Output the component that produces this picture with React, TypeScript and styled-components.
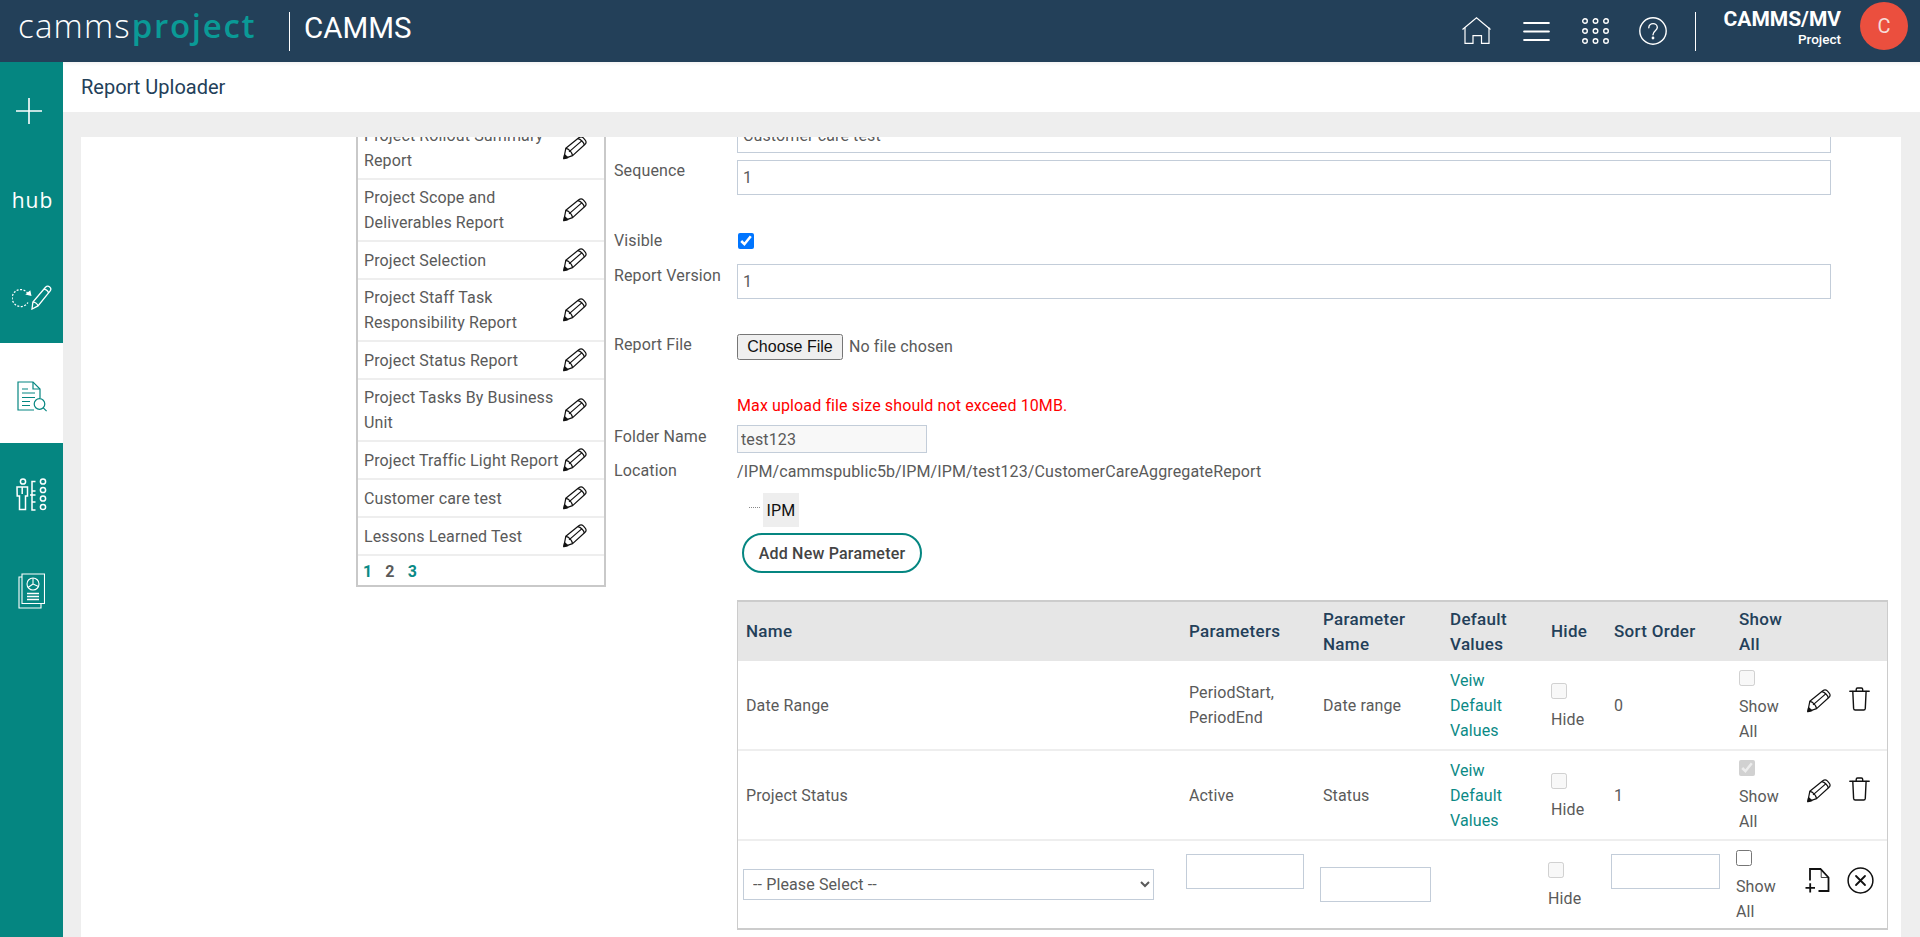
import React from "react";
import styled, { createGlobalStyle } from "styled-components";

const Global = createGlobalStyle`
  html, body { margin: 0; padding: 0; height: 100%; overflow: hidden; }
  body { font-family: Roboto, "Liberation Sans", sans-serif; font-size: 16px; letter-spacing: .12px; color: #5a5a5a; background: #eee; }
  * { box-sizing: border-box; }
`;

const Shell = styled.div`
  width: 1920px; height: 937px; display: flex; flex-direction: column; overflow: hidden;
`;
const Header = styled.header`
  height: 62px; flex: none; background: #234059; display: flex; align-items: center; color: #fff; padding-right: 12px;
`;
const Logo = styled.div`
  margin-left: 18px; width: 271px; font-family: "Open Sans", sans-serif; font-size: 33px; line-height: 52px;
  padding-bottom: 10px; font-weight: 300; letter-spacing: 1.2px; color: #fff; white-space: nowrap;
`;
const LogoAccent = styled.span`
  color: #0a9a96; font-weight: 600; letter-spacing: 1.7px; margin-left: 1px;
`;
const VRule = styled.div`
  width: 1px; height: 39px; background: #fff;
`;
const Tenant = styled.div`
  margin-left: 14px; font-size: 29.5px; font-weight: 400; line-height: 56px; padding-bottom: 6px; flex: 1; letter-spacing: 0;
`;
const HeadIcons = styled.div`
  display: flex; align-items: center;
`;
const HeadIcon = styled.div<{ $w: number }>`
  width: ${(p) => p.$w}px; display: flex;
`;
const UserBox = styled.div`
  margin-left: 26px; width: 119px; text-align: right; display: flex; flex-direction: column; align-items: flex-end;
`;
const UserName = styled.div`
  font-size: 21px; font-weight: 700; line-height: 22px; margin-top: -6px; white-space: nowrap; letter-spacing: 0;
`;
const UserRole = styled.div`
  font-size: 13.5px; font-weight: 500; line-height: 18px; margin-top: 0; letter-spacing: 0;
`;
const Avatar = styled.div`
  margin-left: 19px; width: 48px; height: 48px; border-radius: 50%; background: #eb4f3e; color: #f7dcd8;
  display: flex; align-items: center; justify-content: center; font-size: 20px; margin-top: -10px;
`;
const Body = styled.div`
  flex: 1; display: flex; min-height: 0;
`;
const Sidebar = styled.nav`
  width: 63px; flex: none; background: #058681; display: flex; flex-direction: column;
`;
const SideItem = styled.div<{ $h?: number; $active?: boolean; $nudge?: number; $ox?: number }>`
  height: ${(p) => p.$h ?? 100}px; flex: none; display: flex; align-items: center; justify-content: center;
  background: ${(p) => (p.$active ? "#fff" : "transparent")};
  padding-top: ${(p) => Math.max(p.$nudge ?? 0, 0)}px;
  padding-bottom: ${(p) => Math.max(-(p.$nudge ?? 0), 0)}px;
  padding-right: ${(p) => p.$ox ?? 0}px;
`;
const HubMark = styled.span`
  font-family: "Open Sans", sans-serif; font-size: 21px; font-weight: 400; letter-spacing: 1px; color: #fff;
  line-height: 30px; margin-left: 2px;
`;
const Main = styled.main`
  flex: 1; display: flex; flex-direction: column; min-width: 0;
`;
const SubHeader = styled.div`
  height: 50px; flex: none; background: #fff; padding-left: 18px; display: flex; align-items: center;
  font-size: 20px; letter-spacing: 0; color: #234059; box-shadow: inset 0 5px 4px -4px rgba(0,0,0,.07);
`;
const Panel = styled.div`
  flex: 1; margin: 25px 19px 0 18px; background: #fff; overflow: hidden; min-height: 0;
`;
const Scrolled = styled.div`
  margin-top: -19px; padding-left: 275px; display: flex; align-items: flex-start;
`;
const ReportList = styled.div`
  width: 250px; flex: none; display: flex; flex-direction: column; gap: 2px; background: #eee;
  border-left: 2px solid #c9c9c9; border-right: 2px solid #c9c9c9; border-bottom: 2px solid #c9c9c9;
`;
const ReportRow = styled.div`
  background: #fff; min-height: 36px; padding: 5px 17px 5px 6px; display: flex; align-items: center;
  justify-content: space-between; line-height: 25px;
`;
const ReportName = styled.span`
  max-width: 198px;
`;
const Pager = styled.div`
  background: #fff; height: 29px; display: flex; align-items: center; padding: 2px 0 0 5px; gap: 13px;
  font-weight: 700;
`;
const PageNum = styled.span<{ $link?: boolean }>`
  color: ${(p) => (p.$link ? "#0b8a86" : "#5a5a5a")};
`;
const Form = styled.div`
  flex: 1; padding-left: 8px; display: flex; flex-direction: column; min-width: 0;
`;
const FormRow = styled.div<{ $mt?: number; $h?: number }>`
  display: flex; align-items: center; margin-top: ${(p) => p.$mt ?? 0}px;
  min-height: ${(p) => p.$h ?? 0}px;
`;
const Label = styled.label<{ $up?: number }>`
  width: 123px; flex: none; line-height: 25px; margin-top: -${(p) => p.$up ?? 0}px;
`;
const TextInput = styled.input<{ $w?: number; $h?: number; $mb?: number; $readonly?: boolean }>`
  width: ${(p) => (p.$w ? `${p.$w}px` : "1094px")}; height: ${(p) => p.$h ?? 35}px; flex: none;
  margin-bottom: ${(p) => p.$mb ?? 0}px;
  border: 1px solid #c3cdd9; padding: 0 3px 0 ${(p) => (p.$readonly ? 3 : 5)}px; font: 16px Roboto, sans-serif; letter-spacing: .12px;
  color: #5a5a5a; outline: none;
  background: ${(p) => (p.$readonly ? "#f8f8f8" : "#fff")}; border-radius: 0; display: block;
`;
const Check = styled.input`
  width: 16px; height: 16px; margin: 4px 0 8px; display: block; flex: none;
`;
const VisibleCheck = styled(Check)`
  margin: 0 0 0 1px;
`;
const FileInput = styled.input`
  font: 16px Roboto, sans-serif; letter-spacing: .12px; color: #5a5a5a; height: 26px; width: 300px;
  &::file-selector-button {
    font: 16px "Liberation Sans", sans-serif; width: 106px; height: 26px; margin-right: 6px; color: #111;
  }
`;
const Warning = styled.div`
  color: #f00; line-height: 25px; margin-left: 123px; margin-top: 33px;
`;
const PathText = styled.span`
  line-height: 25px; margin-top: 2px;
`;
const Tree = styled.div`
  margin-left: 135px; margin-top: 9px; display: flex; align-items: center; height: 34px;
`;
const TreeDots = styled.div`
  width: 11px; border-top: 1px dotted #888; margin-right: 3px; margin-top: -5px;
`;
const TreeNode = styled.div`
  width: 36px; height: 34px; background: #eee; color: #111; display: flex; align-items: center; justify-content: center;
`;
const AddButton = styled.button`
  margin-left: 128px; margin-top: 6px; width: 180px; height: 40px; border: 2px solid #058681; border-radius: 20px;
  background: #fff; color: #444; font: 500 16px Roboto, sans-serif; letter-spacing: .2px; align-self: flex-start; padding: 0;
`;
const Table = styled.div`
  margin: 27px 0 0 123px; width: 1151px; border: 1px solid #ccc; border-bottom: 2px solid #ccc; border-top: 2px solid #ccc;
  display: flex; flex-direction: column; gap: 2px; background: #eee;
`;
const TRow = styled.div<{ $h: number; $head?: boolean }>`
  display: grid; grid-template-columns: 443px 134px 127px 101px 63px 125px 66px 1fr;
  height: ${(p) => p.$h}px; align-items: center;
  background: ${(p) => (p.$head ? "#e6e6e6" : "#fff")};
  margin-bottom: ${(p) => (p.$head ? -2 : 0)}px;
`;
const HCell = styled.div`
  padding: 0 8px; font-size: 17px; letter-spacing: .3px; font-weight: 500; color: #234059; line-height: 25px;
`;
const HCellNarrow = styled(HCell)`
  width: min-content;
`;
const Cell = styled.div<{ $pad?: number }>`
  padding: 0 ${(p) => p.$pad ?? 8}px; line-height: 25px;
`;
const Words = styled.div`
  width: min-content;
`;
const LinkWords = styled.a`
  display: block; width: min-content; color: #0b8a86;
`;
const Actions = styled.div<{ $gap?: number; $pl?: number }>`
  display: flex; align-items: center; padding: 0 0 8px ${(p) => p.$pl ?? 10}px; gap: ${(p) => p.$gap ?? 18}px;
`;
const SelectBox = styled.select`
  width: 411px; height: 31px; border: 1px solid #c3cdd9; background: #fff; color: #5a5a5a; padding-left: 5px;
  font: 16px Roboto, sans-serif; letter-spacing: .12px; border-radius: 0; outline: none; display: block;
`;
const TrashSvg = styled.svg`
  margin-bottom: 5px;
`;

const pencilBody = "M.8 22.600L2.800 12.300 15.800 1.700c1.600-1.200 3.300-1 4.500.2l1.900 2.200c1.200 1.500 1 3.200-.4 4.400L9.600 19.600z";
const pencilLines = "M2.800 12.300c3 .4 6.300 3.900 6.800 7.300M6 15.900L19 4.600M14.800 2.600c3 .5 6 3.700 6.500 6.400";

const Pencil = () => (
  <svg width="24" height="24" viewBox="0 0 24 24" fill="none" stroke="#111" strokeWidth="1.200" strokeLinejoin="round">
    <path d={pencilBody} />
    <path d={pencilLines} />
    <path d="M.8 22.600l.8-4 3.300 3z" fill="#111" />
  </svg>
);
const Trash = () => (
  <TrashSvg width="21" height="24" viewBox="0 0 21 24" fill="none" stroke="#111" strokeWidth="1.400" strokeLinecap="round">
    <path d="M.8 4.200h19.400M7.200 4V2.400c0-.8.5-1.400 1.300-1.400h3.900c.8 0 1.300.6 1.300 1.400V4" />
    <path d="M3.800 4.400l.8 17c.1.9.7 1.600 1.600 1.600h8.500c.9 0 1.500-.7 1.600-1.600l.8-17" />
  </TrashSvg>
);
const FileAdd = () => (
  <svg width="25" height="25" viewBox="0 0 25 25" fill="none" stroke="#111" strokeWidth="1.800">
    <path d="M5 12.500V1h10.500L23.500 9.500v13.500H13.500" />
    <path d="M16.200 1.500v8h7" strokeWidth=".8" />
    <path d="M.5 19.800h9.500M5.200 15.200v9.300" />
  </svg>
);
const CircleX = () => (
  <svg width="27" height="27" viewBox="0 0 27 27" fill="none" stroke="#111" strokeWidth="1.500" strokeLinecap="round">
    <circle cx="13.500" cy="13.500" r="12.400" />
    <path d="M9 9l9 9M18 9l-9 9" strokeWidth="1.800" />
  </svg>
);
const HomeIcon = () => (
  <svg width="30" height="28" viewBox="0 0 30 28" fill="none" stroke="#fff" strokeWidth="1.200">
    <path d="M.5 12.500L14.500.8l14 11.700" />
    <path d="M3 10.500v15.800h8v-7.600h8.500v7.600H27V10.500" />
  </svg>
);
const MenuIcon = () => (
  <svg width="27" height="21" viewBox="0 0 27 21" fill="none" stroke="#fff" strokeWidth="2.200" strokeLinecap="round">
    <path d="M1.200 2h24.600M1.200 10.500h24.600M1.200 19h24.600" />
  </svg>
);
const GridIcon = () => (
  <svg width="27" height="26" viewBox="0 0 27 26" fill="none" stroke="#fff" strokeWidth="1.400">
    {[3, 13, 23].flatMap((y) =>
      [3, 13.5, 24].map((x) => <circle key={`${x}-${y}`} cx={x} cy={y} r="2.300" />)
    )}
  </svg>
);
const HelpIcon = () => (
  <svg width="28" height="28" viewBox="0 0 28 28" fill="none" stroke="#fff" strokeWidth="1.400" strokeLinecap="round">
    <circle cx="14" cy="14" r="13.200" />
    <path d="M9.800 10.800c0-2.600 2-4.200 4.300-4.200s4.200 1.600 4.200 3.900c0 3.200-4.300 3.400-4.300 7.200" />
    <circle cx="14" cy="21" r=".7" fill="#fff" />
  </svg>
);
const PlusIcon = () => (
  <svg width="26" height="26" viewBox="0 0 26 26" stroke="#fff" strokeWidth="1.600">
    <path d="M0 13h26M13 0v26" />
  </svg>
);
const EditLoopIcon = () => (
  <svg width="40" height="25" viewBox="0 0 40 25" fill="none" stroke="#fff" strokeWidth="1.300">
    <path d="M15.800 8.400A8.500 8.500 0 1 0 15.900 17.500" strokeDasharray="2 1.500" />
    <path d="M19.500 11l-6.200-1.400 5-4.300z" fill="#fff" stroke="none" />
    <path d="M20 24l.9-7L33.500 2.300c1.200-1.300 2.900-1.400 4.200-.3 1.300 1.100 1.400 2.800.3 4.200L26 20.900z" />
    <path d="M20.900 17c2.100.2 4.700 1.900 5.100 3.900M31.900 4.100c2 .3 4.300 2.100 4.700 4" />
  </svg>
);
const ReportIcon = () => (
  <svg width="30" height="31" viewBox="0 0 30 31" fill="none" stroke="#058681" strokeWidth="1.200">
    <path d="M17 29H1V1h15l7 7v9" />
    <path d="M16 1v7h7" />
    <path d="M5 8h6M5 12h13M5 16.500h13M5 20.500h8M5 24.500h8" />
    <circle cx="22.500" cy="23" r="5.300" />
    <path d="M26.300 26.800l3.300 3.300" />
  </svg>
);
const TeamIcon = () => (
  <svg width="31" height="33" viewBox="0 0 31 33" fill="none" stroke="#fff" strokeWidth="1.500">
    <circle cx="7" cy="3.500" r="2.600" />
    <path d="M1 9h10.500v9h-2v13.500H3.500V18H1.200zM6.200 9v7" />
    <path d="M19.500 3.500h-3.500v28.500h3.500M14 17h5.500M16 13h3.500M16 24h3.500" />
    {[3.5, 12, 20.5, 29].map((y) => <circle key={y} cx="27" cy={y} r="2.600" />)}
  </svg>
);
const ChartDocIcon = () => (
  <svg width="27" height="36" viewBox="0 0 27 36" fill="none" stroke="#fff" strokeWidth="1.100">
    <path d="M4 1h22.500v29.500H4z" />
    <path d="M4 4H1v31h22v-4.500" />
    <circle cx="15" cy="11" r="6" />
    <path d="M15 11V5M15 11l-5 3.500M15 11l5.500 2.500" />
    <path d="M9 20.500h12M9 23.500h12M9 26.500h12" strokeWidth="1.300" />
  </svg>
);

const reports: string[] = [
  "Project Rollout Summary Report",
  "Project Scope and Deliverables Report",
  "Project Selection",
  "Project Staff Task Responsibility Report",
  "Project Status Report",
  "Project Tasks By Business Unit",
  "Project Traffic Light Report",
  "Customer care test",
  "Lessons Learned Test",
];

const params = [
  { name: "Date Range", values: "PeriodStart, PeriodEnd", label: "Date range", sort: "0", all: false },
  { name: "Project Status", values: "Active", label: "Status", sort: "1", all: true },
];

export default function App() {
  return (
    <Shell>
      <Global />
      <Header>
        <Logo>camms<LogoAccent>project</LogoAccent></Logo>
        <VRule />
        <Tenant>CAMMS</Tenant>
        <HeadIcons>
          <HeadIcon $w={61}><HomeIcon /></HeadIcon>
          <HeadIcon $w={59}><MenuIcon /></HeadIcon>
          <HeadIcon $w={57}><GridIcon /></HeadIcon>
          <HeadIcon $w={56}><HelpIcon /></HeadIcon>
        </HeadIcons>
        <VRule />
        <UserBox>
          <UserName>CAMMS/MV</UserName>
          <UserRole>Project</UserRole>
        </UserBox>
        <Avatar>C</Avatar>
      </Header>
      <Body>
        <Sidebar>
          <SideItem $h={81} $nudge={16} $ox={5}><PlusIcon /></SideItem>
          <SideItem $nudge={14}><HubMark>hub</HubMark></SideItem>
          <SideItem $nudge={8}><EditLoopIcon /></SideItem>
          <SideItem $active $nudge={6}><ReportIcon /></SideItem>
          <SideItem $nudge={2}><TeamIcon /></SideItem>
          <SideItem $nudge={-5}><ChartDocIcon /></SideItem>
        </Sidebar>
        <Main>
          <SubHeader>Report Uploader</SubHeader>
          <Panel>
            <Scrolled>
              <ReportList>
                {reports.map((r) => (
                  <ReportRow key={r}>
                    <ReportName>{r}</ReportName>
                    <Pencil />
                  </ReportRow>
                ))}
                <Pager>
                  <PageNum $link>1</PageNum>
                  <PageNum>2</PageNum>
                  <PageNum $link>3</PageNum>
                </Pager>
              </ReportList>
              <Form>
                <FormRow>
                  <Label />
                  <TextInput defaultValue="Customer care test" />
                </FormRow>
                <FormRow $mt={7}>
                  <Label $up={14}>Sequence</Label>
                  <TextInput defaultValue="1" />
                </FormRow>
                <FormRow $mt={33} $h={25}>
                  <Label>Visible</Label>
                  <VisibleCheck type="checkbox" defaultChecked />
                </FormRow>
                <FormRow $mt={11}>
                  <Label $up={12}>Report Version</Label>
                  <TextInput defaultValue="1" />
                </FormRow>
                <FormRow $mt={35}>
                  <Label $up={5}>Report File</Label>
                  <FileInput type="file" />
                </FormRow>
                <Warning>Max upload file size should not exceed 10MB.</Warning>
                <FormRow $mt={7}>
                  <Label $up={6}>Folder Name</Label>
                  <TextInput $w={190} $h={28} $readonly defaultValue="test123" readOnly />
                </FormRow>
                <FormRow $mt={4}>
                  <Label>Location</Label>
                  <PathText>/IPM/cammspublic5b/IPM/IPM/test123/CustomerCareAggregateReport</PathText>
                </FormRow>
                <Tree>
                  <TreeDots />
                  <TreeNode>IPM</TreeNode>
                </Tree>
                <AddButton>Add New Parameter</AddButton>
                <Table>
                  <TRow $h={59} $head>
                    <HCell>Name</HCell>
                    <HCell>Parameters</HCell>
                    <HCell>Parameter Name</HCell>
                    <HCell>Default Values</HCell>
                    <HCell>Hide</HCell>
                    <HCell>Sort Order</HCell>
                    <HCellNarrow>Show All</HCellNarrow>
                    <HCell />
                  </TRow>
                  {params.map((p) => (
                    <TRow $h={88} key={p.name}>
                      <Cell>{p.name}</Cell>
                      <Cell><Words>{p.values}</Words></Cell>
                      <Cell>{p.label}</Cell>
                      <Cell><LinkWords>Veiw Default Values</LinkWords></Cell>
                      <Cell>
                        <Check type="checkbox" disabled />
                        Hide
                      </Cell>
                      <Cell>{p.sort}</Cell>
                      <Cell>
                        <Check type="checkbox" disabled defaultChecked={p.all} />
                        <Words>Show All</Words>
                      </Cell>
                      <Actions><Pencil /><Trash /></Actions>
                    </TRow>
                  ))}
                  <TRow $h={87}>
                    <Cell $pad={5}>
                      <SelectBox defaultValue="">
                        <option value="">-- Please Select --</option>
                      </SelectBox>
                    </Cell>
                    <Cell $pad={5}><TextInput $w={118} $mb={26} /></Cell>
                    <Cell $pad={5}><TextInput $w={111} /></Cell>
                    <Cell />
                    <Cell $pad={5}>
                      <Check type="checkbox" disabled />
                      Hide
                    </Cell>
                    <Cell $pad={5}><TextInput $w={109} $mb={26} /></Cell>
                    <Cell $pad={5}>
                      <Check type="checkbox" />
                      <Words>Show All</Words>
                    </Cell>
                    <Actions $gap={17} $pl={8}><FileAdd /><CircleX /></Actions>
                  </TRow>
                </Table>
              </Form>
            </Scrolled>
          </Panel>
        </Main>
      </Body>
    </Shell>
  );
}
